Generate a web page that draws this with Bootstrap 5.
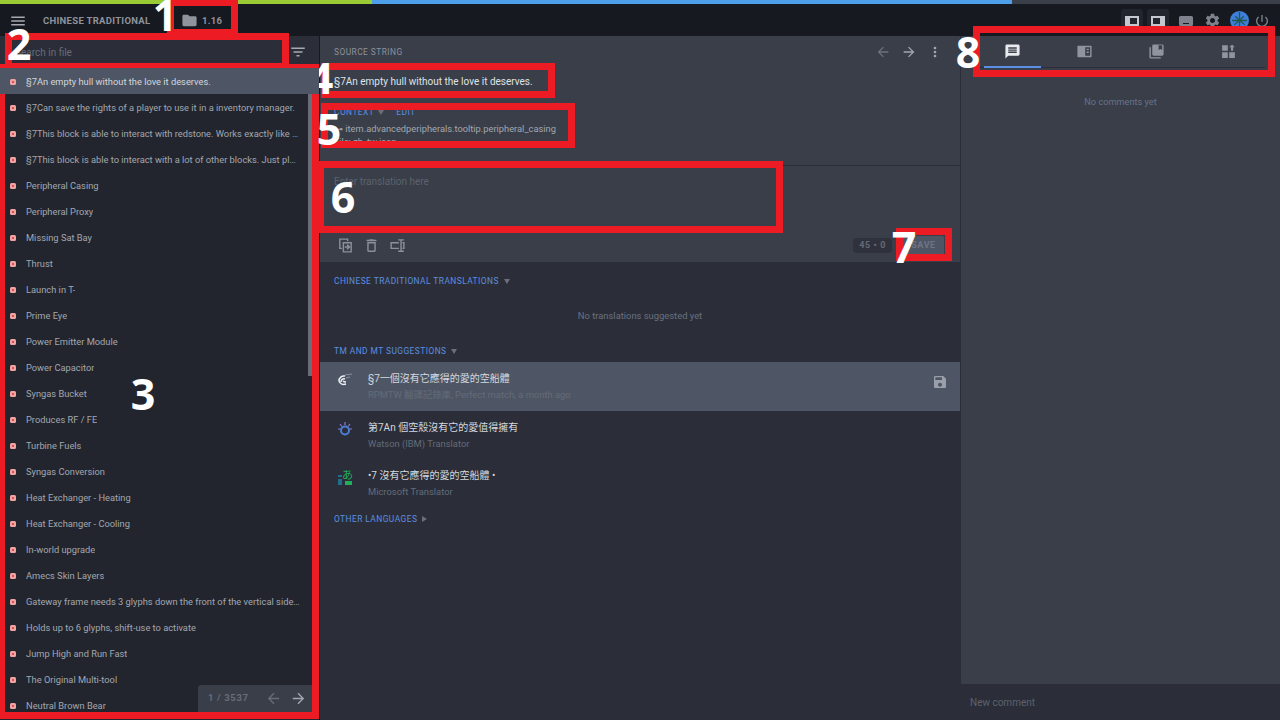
<!DOCTYPE html>
<html lang="en">
<head>
    <meta charset="UTF-8">
    <meta name="viewport" content="width=device-width, initial-scale=1.0">
    <title>Chinese Traditional - Editor</title>
    <link href="https://cdn.jsdelivr.net/npm/bootstrap@5.3.0/dist/css/bootstrap.min.css" rel="stylesheet">
    <style>
        html, body { height: 100%; }
        body {
            width: 1280px; height: 720px; overflow: hidden; position: relative;
            background: #22252e; color: #d5d8de;
            font-family: Roboto, "Noto Sans CJK TC", sans-serif; font-size: 12px;
        }
        svg { fill: currentColor; display: block; flex-shrink: 0; }

        /* top progress strip */
        .strip { height: 4px; background: #393e49; }
        .strip-green { width: 372px; background: #9acb34; }
        .strip-blue { width: 640px; background: #4d9fea; }

        /* header */
        .topbar { height: 32px; background: #16191f; color: #8f939c; padding-top: 1px; }
        .burger { width: 36px; color: #a6a9b0; }
        .lang-title { font-size: 9.5px; font-weight: 700; letter-spacing: .3px; margin: 2px 0 0 7px; width: 138px; }
        .branch { font-size: 9.5px; font-weight: 700; letter-spacing: .3px; gap: 4px; }
        .branch span { margin-top: 2px; }
        .panel-toggle { width: 22px; height: 24px; background: #22252e; border-radius: 3px; color: #c4c7cd; }
        .panel-toggle + .panel-toggle { margin-left: 4px; }
        .top-icons { margin-right: 7px; }
        .top-icon { color: #7d828c; }
        .icon-keys { width: 22px; margin-left: 6px; }
        .icon-gear { width: 30px; }
        .icon-globe { width: 24px; }
        .icon-power { width: 22px; }
        .globe { width: 19px; height: 19px; border-radius: 50%; background: #3d7fd9; }

        /* columns */
        .workspace { height: 684px; }
        .files-col { width: 320px; position: relative; border-right: 1px solid #16191f; }
        .editor-col { width: 640px; }
        .comments-col { width: 320px; background: #393e49; border-left: 1px solid #2b2e38; }

        /* string list */
        .search-row { height: 32px; background: #2b2e38; color: #a6a9b0; }
        .search-input.form-control {
            background: transparent; border: 0; border-radius: 0; box-shadow: none; padding: 0 0 0 15px;
            color: #d5d8de; font-size: 10px; height: 32px;
        }
        .search-input::placeholder { color: #676c77; }
        .filter-btn { width: 46px; color: #a6a9b0; padding-left: 4px; flex-shrink: 0; }
        .string-list { border-radius: 0; overflow: hidden; flex: 1; background: #22252e; }
        .string-row.list-group-item {
            background: transparent; border: 0; height: 26px; padding: 2px 19px 0 10px; flex: none;
            color: #a3a7af; font-size: 9.3px; line-height: 24px; border-radius: 0;
        }
        .string-row.list-group-item.active { background: #4e5665; color: #d3d6dc; }
        .status-dot {
            width: 6px; height: 6px; border-radius: 1.5px; background: #f0a5a3; margin-right: 10px; flex-shrink: 0;
        }
        .status-dot::after { content: ""; display: block; width: 2px; height: 2px; margin: 2px; background: #d9534f; }
        .scroll-thumb { position: absolute; left: 308px; top: 32px; width: 4px; height: 308px; background: #696d77; }
        .pager {
            position: absolute; left: 198px; top: 649px; width: 114px; height: 27px; background: #393e49;
            border-radius: 3px 0 0 0; color: #666c78; font-size: 9.6px; font-weight: 700; letter-spacing: .6px;
            padding: 0 5px 0 10px;
        }
        .pager-next { color: #a2a6ae; }

        /* editor */
        .source-pane { height: 226px; background: #393e49; position: relative; }
        .source-top { height: 130px; padding: 0 17px 0 14px; border-bottom: 1px solid #2b2e38; }
        .section-label { font-size: 8.4px; letter-spacing: .45px; color: #8c919c; text-transform: uppercase; }
        .source-head { height: 32px; color: #6c727d; }
        .source-head .nav-next { color: #a2a6ae; }
        .source-head svg { margin-left: 10px; }
        .source-text { font-size: 10px; color: #dfe2e6; margin-top: 6px; line-height: 16px; height: 16px; }
        .context-head { font-size: 8.4px; letter-spacing: .45px; color: #5c8fe0; margin-top: 16px; line-height: 12px; gap: 12px; }
        .context-lines { font-size: 9.3px; color: #a3a7af; margin-top: 4px; line-height: 13px; }
        .translation-input.form-control {
            background: transparent; border: 0; border-radius: 0; box-shadow: none; resize: none;
            height: 62px; padding: 8px 14px; color: #d5d8de; font-size: 10px;
        }
        .translation-input::placeholder { color: #5c626e; }
        .toolbar { height: 34px; padding: 0 16px 0 17px; color: #8b909a; }
        .toolbar svg { margin-right: 9px; }
        .count-pill { background: #2f323c; color: #646a76; border-radius: 4px; font-size: 9px; font-weight: 700; letter-spacing: .6px; padding: 0 6px; height: 15px; line-height: 15px; margin-right: 11px; }
        .save-btn.btn {
            background: #4e5665; border: 0; border-radius: 2px; color: #6e7582; font-size: 9px; font-weight: 700;
            letter-spacing: .6px; padding: 0; width: 41px; height: 19px; line-height: 19px;
        }

        .results-pane { background: #2b2e38; flex: 1; }
        .results-label { font-size: 8.4px; letter-spacing: .45px; color: #5c8fe0; padding-left: 14px; gap: 5px; line-height: 12px; }
        .translations-label { margin-top: 13px; }
        .tm-label { margin-top: 22px; }
        .other-label { margin-top: 5.5px; }
        .caret-down { width: 0; height: 0; border-left: 3.5px solid transparent; border-right: 3.5px solid transparent; border-top: 5px solid #6a6f7a; }
        .caret-right { width: 0; height: 0; border-top: 3.5px solid transparent; border-bottom: 3.5px solid transparent; border-left: 5px solid #6a6f7a; }
        .empty-note { color: #6a7180; font-size: 9.4px; text-align: center; margin-top: 22px; line-height: 14px; }
        .suggest-list { border-radius: 0; margin-top: 5px; }
        .suggest-row.list-group-item {
            background: transparent; border: 0; border-radius: 0; padding: 2px 12px 0 16px; height: 48.5px; color: #d5d8de;
        }
        .suggest-row.list-group-item.active { background: #4e5665; }
        .suggest-logo { width: 18px; margin: 0 14px 14px 0; }
        .suggest-main { font-size: 10px; line-height: 16px; }
        .suggest-sub { font-size: 9.4px; line-height: 16px; color: #646b78; }
        .suggest-save { color: #9a9fa9; margin-left: auto; margin-bottom: 10px; }

        /* comments */
        .comment-tabs.nav { height: 32px; margin: 0 15px; border-bottom: 1px solid #2b2e38; flex-wrap: nowrap; }
        .comment-tab { width: 72px; color: #8f949e; position: relative; }
        .comment-tab.is-open { color: #e8eaee; }
        .comment-tab.is-open::after {
            content: ""; position: absolute; left: 8px; right: 7px; bottom: -1px; height: 2px; background: #5b8fe8;
        }
        .no-comments { color: #66738c; font-size: 9.2px; text-align: center; margin-top: 27px; }
        .comment-box { height: 36px; background: #2b2e38; padding: 0 9px; }
        .comment-input.form-control {
            background: transparent; border: 0; box-shadow: none; padding: 0; font-size: 10px; color: #d5d8de; border-radius: 0;
        }
        .comment-input::placeholder { color: #5c626e; }

        /* red annotations over the screenshot */
        .anno-box { position: absolute; border: 7px solid #ed1c24; pointer-events: none; }
        .anno-1 { left: 167px; top: -1px; width: 71px; height: 37px; }
        .anno-2 { left: 5px; top: 33px; width: 284px; height: 37px; }
        .anno-3 { left: -2px; top: 64px; width: 321px; height: 655px; }
        .anno-4 { left: 321px; top: 63px; width: 234px; height: 35px; }
        .anno-5 { left: 321px; top: 103px; width: 254px; height: 45px; }
        .anno-6 { left: 317px; top: 161px; width: 466px; height: 72px; }
        .anno-7 { left: 896px; top: 228px; width: 56px; height: 33px; }
        .anno-8 { left: 973px; top: 26px; width: 302px; height: 51px; }
        .anno-num {
            position: absolute; font-family: "Open Sans", sans-serif; font-weight: 700; font-size: 43px; line-height: 1;
            color: #fff; pointer-events: none; transform: translate(-50%, -50%);
        }
        .num-1 { left: 165px; top: 14px; }
        .num-2 { left: 19px; top: 43px; }
        .num-3 { left: 143px; top: 393px; }
        .num-4 { left: 321px; top: 77px; }
        .num-5 { left: 329px; top: 128px; }
        .num-6 { left: 343px; top: 196px; }
        .num-7 { left: 904px; top: 246px; }
        .num-8 { left: 968px; top: 51px; }
    </style>
</head>
<body>

<div class="strip d-flex">
    <div class="strip-green"></div>
    <div class="strip-blue"></div>
</div>

<header class="topbar d-flex align-items-center">
    <div class="burger d-flex justify-content-center">
        <svg width="18" height="18" viewBox="0 0 24 24"><path d="M3 18h18v-2H3v2zm0-5h18v-2H3v2zm0-7v2h18V6H3z"/></svg>
    </div>
    <div class="lang-title text-nowrap">CHINESE TRADITIONAL</div>
    <div class="branch d-flex align-items-center">
        <svg width="17" height="17" viewBox="0 0 24 24"><path d="M10 4H4c-1.100 0-1.990.9-1.990 2L2 18c0 1.100.9 2 2 2h16c1.100 0 2-.9 2-2V8c0-1.100-.9-2-2-2h-8l-2-2z"/></svg>
        <span>1.16</span>
    </div>
    <div class="ms-auto top-icons d-flex align-items-center">
        <div class="panel-toggle d-flex align-items-center justify-content-center">
            <svg width="16" height="16" viewBox="0 0 16 16"><path fill-rule="evenodd" d="M1 3h14v10H1zm5 2v6h7V5z"/></svg>
        </div>
        <div class="panel-toggle d-flex align-items-center justify-content-center">
            <svg width="16" height="16" viewBox="0 0 16 16"><path fill-rule="evenodd" d="M1 3h14v10H1zm2 2v6h7V5z"/></svg>
        </div>
        <div class="top-icon icon-keys d-flex justify-content-center">
            <svg width="16" height="16" viewBox="0 0 16 16"><path fill-rule="evenodd" d="M2.500 3h11A1.500 1.500 0 0 1 15 4.500v7a1.500 1.500 0 0 1-1.500 1.500h-11A1.500 1.500 0 0 1 1 11.500v-7A1.500 1.500 0 0 1 2.500 3zM5 10v1h6v-1z"/></svg>
        </div>
        <div class="top-icon icon-gear d-flex justify-content-center">
            <svg width="17" height="17" viewBox="0 0 24 24"><path d="M19.140 12.940c.04-.3.06-.61.06-.94 0-.32-.02-.64-.07-.94l2.030-1.580c.18-.14.23-.41.12-.61l-1.920-3.320c-.12-.22-.37-.29-.59-.22l-2.390.96c-.5-.38-1.030-.7-1.620-.94l-.36-2.540c-.04-.24-.24-.41-.48-.41h-3.840c-.24 0-.43.17-.47.41l-.36 2.540c-.59.24-1.130.57-1.620.94l-2.390-.96c-.22-.08-.47 0-.59.22L2.740 8.870c-.12.21-.08.47.12.61l2.030 1.580c-.05.3-.09.63-.09.94s.02.64.07.94l-2.030 1.580c-.18.14-.23.41-.12.61l1.920 3.320c.12.22.37.29.59.22l2.390-.96c.5.38 1.030.7 1.620.94l.36 2.540c.05.24.24.41.48.41h3.840c.24 0 .44-.17.47-.41l.36-2.540c.59-.24 1.130-.56 1.620-.94l2.390.96c.22.08.47 0 .59-.22l1.920-3.320c.12-.22.07-.47-.12-.61l-2.010-1.580zM12 15.600c-1.980 0-3.600-1.620-3.600-3.600s1.620-3.600 3.600-3.600 3.600 1.620 3.600 3.600-1.620 3.600-3.600 3.600z"/></svg>
        </div>
        <div class="top-icon icon-globe d-flex justify-content-center">
            <svg class="globe" viewBox="0 0 18 18"><path fill="none" stroke="#1f5a4c" stroke-width="1.200" d="M9 1v16M5 5l4 4 4-4M4 13l5-4 5 4M2 9h14"/></svg>
        </div>
        <div class="top-icon icon-power d-flex justify-content-center">
            <svg width="16" height="16" viewBox="0 0 24 24"><path d="M13 3h-2v10h2V3zm4.830 2.170l-1.420 1.420C17.990 7.860 19 9.810 19 12c0 3.870-3.130 7-7 7s-7-3.130-7-7c0-2.190 1.010-4.140 2.580-5.420L6.170 5.170C4.230 6.820 3 9.260 3 12c0 4.970 4.030 9 9 9s9-4.030 9-9c0-2.740-1.230-5.180-3.170-6.830z"/></svg>
        </div>
    </div>
</header>

<main class="workspace d-flex">
    <section class="files-col d-flex flex-column">
        <div class="search-row d-flex align-items-center">
            <input class="search-input form-control" type="text" placeholder="Search in file">
            <div class="filter-btn d-flex justify-content-center">
                <svg width="18" height="18" viewBox="0 0 24 24"><path d="M10 18h4v-2h-4v2zM3 6v2h18V6H3zm3 7h12v-2H6v2z"/></svg>
            </div>
        </div>
        <div class="string-list list-group" id="strings"></div>
        <div class="scroll-thumb"></div>
        <div class="pager d-flex align-items-center justify-content-between">
            <span>1 / 3537</span>
            <span class="d-flex gap-2">
                <svg width="17" height="17" viewBox="0 0 24 24"><path d="M20 11H7.830l5.590-5.590L12 4l-8 8 8 8 1.410-1.410L7.830 13H20v-2z"/></svg>
                <svg class="pager-next" width="17" height="17" viewBox="0 0 24 24"><path d="M12 4l-1.410 1.410L16.170 11H4v2h12.170l-5.580 5.590L12 20l8-8z"/></svg>
            </span>
        </div>
    </section>

    <section class="editor-col d-flex flex-column">
        <div class="source-pane">
            <div class="source-top">
                <div class="source-head d-flex align-items-center justify-content-between">
                    <span class="section-label">Source string</span>
                    <span class="d-flex align-items-center">
                        <svg width="16" height="16" viewBox="0 0 24 24"><path d="M20 11H7.830l5.590-5.590L12 4l-8 8 8 8 1.410-1.410L7.830 13H20v-2z"/></svg>
                        <svg class="nav-next" width="16" height="16" viewBox="0 0 24 24"><path d="M12 4l-1.410 1.410L16.170 11H4v2h12.170l-5.580 5.590L12 20l8-8z"/></svg>
                        <svg class="nav-next" width="16" height="16" viewBox="0 0 24 24"><path d="M12 8c1.100 0 2-.9 2-2s-.9-2-2-2-2 .9-2 2 .9 2 2 2zm0 2c-1.100 0-2 .9-2 2s.9 2 2 2 2-.9 2-2-.9-2-2-2zm0 6c-1.100 0-2 .9-2 2s.9 2 2 2 2-.9 2-2-.9-2-2-2z"/></svg>
                    </span>
                </div>
                <div class="source-text">§7An empty hull without the love it deserves.</div>
                <div class="context-head d-flex align-items-center">
                    <span class="d-flex align-items-center gap-1">CONTEXT <span class="caret-down"></span></span>
                    <span>EDIT</span>
                </div>
                <div class="context-lines">
                    <div>⊶ item.advancedperipherals.tooltip.peripheral_casing</div>
                    <div>File: zh_tw.json</div>
                </div>
            </div>
            <textarea class="translation-input form-control" placeholder="Enter translation here"></textarea>
            <div class="toolbar d-flex align-items-center">
                <svg width="17" height="17" viewBox="0 0 24 24"><path fill-rule="evenodd" d="M3 2h13v4h-2V4H5v11h2v2H3zM8 7h13v15H8zm2 2v11h9V9zm1 4h4l-1.500-1.500L15 10l4 4-4 4-1.500-1.500L15 15h-4z"/></svg>
                <svg width="17" height="17" viewBox="0 0 24 24"><path d="M6 19c0 1.100.9 2 2 2h8c1.100 0 2-.9 2-2V7H6v12zM8 9h8v10H8V9zm7.500-5l-1-1h-5l-1 1H5v2h14V4z"/></svg>
                <svg width="17" height="17" viewBox="0 0 24 24"><path fill-rule="evenodd" d="M13 3h8v2h-3v14h3v2h-8v-2h3V5h-3zM2 7h12v2H4v6h10v2H2zm17 0h3v10h-3v-2h1V9h-1z"/></svg>
                <span class="count-pill ms-auto">45 • 0</span>
                <button class="save-btn btn" type="button">SAVE</button>
            </div>
        </div>

        <div class="results-pane d-flex flex-column">
            <div class="results-label translations-label d-flex align-items-center text-uppercase">Chinese Traditional translations <span class="caret-down"></span></div>
            <div class="empty-note">No translations suggested yet</div>
            <div class="results-label tm-label d-flex align-items-center text-uppercase">TM and MT suggestions <span class="caret-down"></span></div>
            <div class="list-group suggest-list">
                <div class="suggest-row list-group-item active d-flex align-items-center">
                    <div class="suggest-logo d-flex justify-content-center">
                        <svg width="16" height="14" viewBox="0 0 16 14"><path fill="none" stroke="#eef0f3" stroke-width="1.500" d="M2 8a5 5 0 0 1 6-5M4 9a3 3 0 0 1 4-3M2 8c1 3 4 4 7 3M6 8c1 1 2 1 3 1"/><path fill="none" stroke="#8a8f99" stroke-width="1" d="M8 2l7-1M9 5l4-1"/></svg>
                    </div>
                    <div>
                        <div class="suggest-main">§7一個沒有它應得的愛的空船體</div>
                        <div class="suggest-sub">RPMTW 翻譯記錄庫, Perfect match, a month ago</div>
                    </div>
                    <svg class="suggest-save" width="16" height="16" viewBox="0 0 24 24"><path d="M17 3H5c-1.110 0-2 .9-2 2v14c0 1.100.89 2 2 2h14c1.100 0 2-.9 2-2V7l-4-4zm-5 16c-1.660 0-3-1.340-3-3s1.340-3 3-3 3 1.340 3 3-1.340 3-3 3zm3-10H5V5h10v4z"/></svg>
                </div>
                <div class="suggest-row list-group-item d-flex align-items-center">
                    <div class="suggest-logo d-flex justify-content-center">
                        <svg width="16" height="16" viewBox="0 0 16 16"><circle cx="8" cy="9.500" r="4" fill="none" stroke="#4a7fd6" stroke-width="2"/><path fill="none" stroke="#8b78d8" stroke-width="1.200" d="M8 1v3M3 3l2 2.500M13 3l-2 2.500M1 8h2.500M15 8h-2.500"/></svg>
                    </div>
                    <div>
                        <div class="suggest-main">第7An 個空殼沒有它的愛值得擁有</div>
                        <div class="suggest-sub">Watson (IBM) Translator</div>
                    </div>
                </div>
                <div class="suggest-row list-group-item d-flex align-items-center">
                    <div class="suggest-logo d-flex justify-content-center">
                        <svg width="16" height="17" viewBox="0 0 16 17"><text x="5" y="10" font-size="11" fill="#1fae5c" font-family="Noto Sans CJK JP, sans-serif">あ</text><path fill="#1f6f8b" d="M1 6h4v2H1zM1 10h4v6H1z"/><path fill="#1fae5c" d="M8 12h7v4H8z"/></svg>
                    </div>
                    <div>
                        <div class="suggest-main">•7 沒有它應得的愛的空船體 •</div>
                        <div class="suggest-sub">Microsoft Translator</div>
                    </div>
                </div>
            </div>
            <div class="results-label other-label d-flex align-items-center text-uppercase">Other languages <span class="caret-right"></span></div>
        </div>
    </section>

    <aside class="comments-col d-flex flex-column">
        <nav class="comment-tabs nav">
            <div class="comment-tab is-open d-flex align-items-center justify-content-center">
                <svg width="17" height="17" viewBox="0 0 24 24"><path d="M20 2H4c-1.100 0-1.990.9-1.990 2L2 22l4-4h14c1.100 0 2-.9 2-2V4c0-1.100-.9-2-2-2zm-2 12H6v-2h12v2zm0-3H6V9h12v2zm0-3H6V6h12v2z"/></svg>
            </div>
            <div class="comment-tab d-flex align-items-center justify-content-center">
                <svg width="17" height="17" viewBox="0 0 24 24"><path fill-rule="evenodd" d="M3 4h18a1 1 0 0 1 1 1v14a1 1 0 0 1-1 1H3a1 1 0 0 1-1-1V5a1 1 0 0 1 1-1zm10 2v12h7V6zm2 2h3v2h-3zm0 4h3v2h-3z"/></svg>
            </div>
            <div class="comment-tab d-flex align-items-center justify-content-center">
                <svg width="17" height="17" viewBox="0 0 24 24"><path fill-rule="evenodd" d="M8 2h12a2 2 0 0 1 2 2v12a2 2 0 0 1-2 2H8a2 2 0 0 1-2-2V4a2 2 0 0 1 2-2zm7 1v7l2.500-1.500L20 10V3z"/><path d="M4 6H2v14c0 1.100.9 2 2 2h14v-2H4V6z"/></svg>
            </div>
            <div class="comment-tab d-flex align-items-center justify-content-center">
                <svg width="17" height="17" viewBox="0 0 24 24"><path d="M3 3h8v8H3zM3 13h8v8H3zM13 13h8v8h-8zM17 2l4 4h-2.500v5h-3V6H13z"/></svg>
            </div>
        </nav>
        <div class="no-comments flex-grow-1">No comments yet</div>
        <div class="comment-box d-flex align-items-center">
            <input class="comment-input form-control" type="text" placeholder="New comment">
        </div>
    </aside>
</main>

<div class="anno-box anno-1"></div>
<div class="anno-box anno-2"></div>
<div class="anno-box anno-3"></div>
<div class="anno-box anno-4"></div>
<div class="anno-box anno-5"></div>
<div class="anno-box anno-6"></div>
<div class="anno-box anno-7"></div>
<div class="anno-box anno-8"></div>
<div class="anno-num num-1">1</div>
<div class="anno-num num-2">2</div>
<div class="anno-num num-3">3</div>
<div class="anno-num num-4">4</div>
<div class="anno-num num-5">5</div>
<div class="anno-num num-6">6</div>
<div class="anno-num num-7">7</div>
<div class="anno-num num-8">8</div>

<script src="https://cdn.jsdelivr.net/npm/bootstrap@5.3.0/dist/js/bootstrap.bundle.min.js"></script>
<script>
    const strings = [
        '§7An empty hull without the love it deserves.',
        '§7Can save the rights of a player to use it in a inventory manager.',
        '§7This block is able to interact with redstone. Works exactly like a redstone computer',
        '§7This block is able to interact with a lot of other blocks. Just place it next to one',
        'Peripheral Casing', 'Peripheral Proxy', 'Missing Sat Bay', 'Thrust', 'Launch in T-', 'Prime Eye',
        'Power Emitter Module', 'Power Capacitor', 'Syngas Bucket', 'Produces RF / FE', 'Turbine Fuels',
        'Syngas Conversion', 'Heat Exchanger - Heating', 'Heat Exchanger - Cooling', 'In-world upgrade',
        'Amecs Skin Layers', 'Gateway frame needs 3 glyphs down the front of the vertical sides of the gate',
        'Holds up to 6 glyphs, shift-use to activate', 'Jump High and Run Fast', 'The Original Multi-tool',
        'Neutral Brown Bear'
    ];
    const list = document.getElementById('strings');
    strings.forEach((text, i) => {
        const row = document.createElement('div');
        row.className = 'string-row list-group-item d-flex align-items-center' + (i === 0 ? ' active' : '');
        const dot = document.createElement('span');
        dot.className = 'status-dot';
        const label = document.createElement('span');
        label.className = 'text-truncate';
        label.textContent = text;
        row.append(dot, label);
        list.append(row);
    });
</script>

</body>
</html>
